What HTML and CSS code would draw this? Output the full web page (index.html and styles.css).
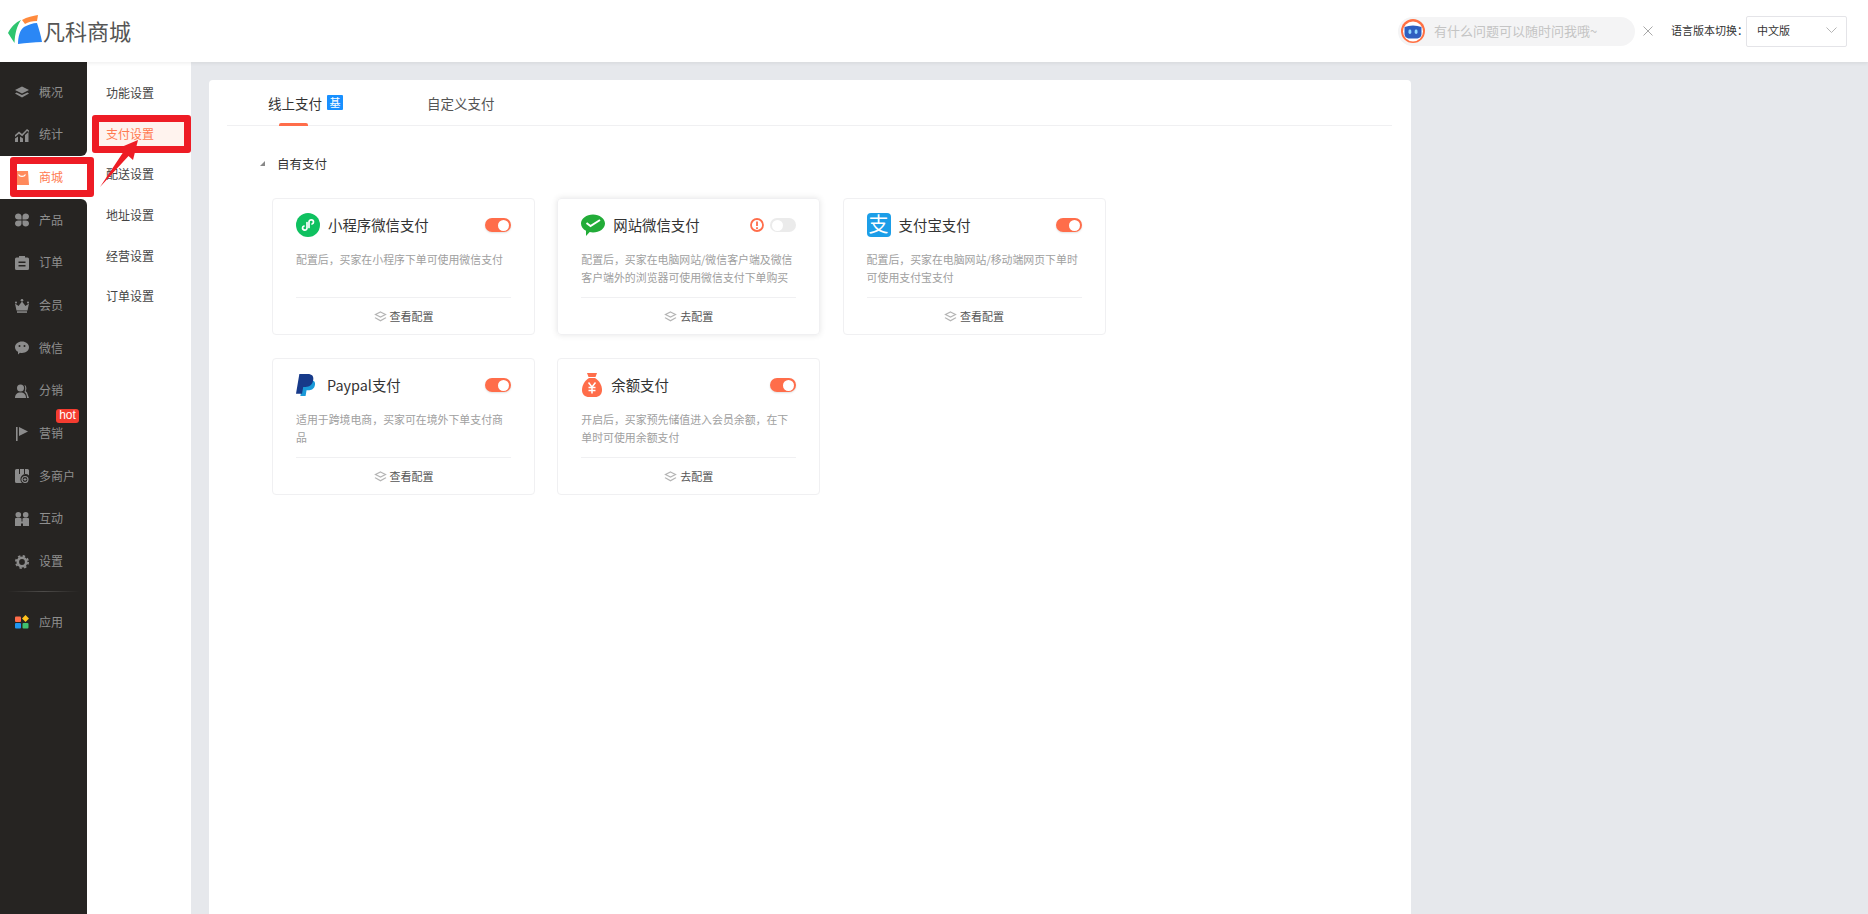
FILE: index.html
```html
<!DOCTYPE html>
<html lang="zh-CN">

<head>
    <meta charset="UTF-8">
    <meta name="viewport" content="width=device-width, initial-scale=1.0">
    <title>支付设置</title>
    <link rel="stylesheet" href="styles.css">
</head>

<body>

    <svg class="sprites" width="0" height="0">
        <symbol id="layers" viewBox="0 0 14 12">
            <path d="M7 .5 14 4 7 7.500 0 4Z" />
            <path d="M1.600 6.400 7 9.100l5.400-2.700L14 7.400 7 11.500 0 7.400Z" />
        </symbol>
        <symbol id="layers-line" viewBox="0 0 14 12">
            <path d="M7 1 12.500 3.800 7 6.600 1.500 3.800Z" fill="none" stroke="#b5b5b5" stroke-width="1.300" />
            <path d="M1.500 6.800 7 9.800 12.500 6.800 13.500 7.700 7 11.500 .5 7.700Z" fill="#b5b5b5" />
        </symbol>
    </svg>

    <header class="topbar">
        <div class="logo">
            <svg class="logo-mark" viewBox="0 0 36 32" width="36" height="32">
                <path d="M0 18C3 12 8 7 13 5 9 11 7 18 6.500 28 4 24 2 21 0 18Z" fill="#2ec56f" />
                <path d="M14 5C19 2 25 1 30 0L29 6C24 6 20 7 17 9Z" fill="#ff8a3d" />
                <path d="M10 29C10 21 12 15 16 12 20 10 25 8 29 8 31 14 33 21 34 27 26 27 18 28 10 29Z" fill="#2b87f5" />
            </svg>
            <span class="logo-text">凡科商城</span>
        </div>
        <div class="topbar-right">
            <div class="ask">
                <svg class="ask-avatar" viewBox="0 0 24 24" width="24" height="24">
                    <circle cx="12" cy="12" r="12" fill="#ff7043" />
                    <circle cx="12" cy="12.500" r="10" fill="#fff" />
                    <path d="M3.500 8 7.500 7C10.500 6.300 13.500 6.300 16.500 7L20.500 8V15C20.500 18 18 19.500 15.500 19.500H8.500C6 19.500 3.500 18 3.500 15Z" fill="#2f5fc0" />
                    <rect x="7.500" y="10.500" width="2.800" height="4.500" rx="1.400" fill="#8fd8ff" />
                    <rect x="13.700" y="10.500" width="2.800" height="4.500" rx="1.400" fill="#8fd8ff" />
                </svg>
                <span>有什么问题可以随时问我哦~</span>
            </div>
            <svg class="ask-close" viewBox="0 0 10 10" width="10" height="10">
                <path d="M.5.5l9 9M9.500.5l-9 9" stroke="#a8a8a8" stroke-width="1" fill="none" />
            </svg>
            <span class="lang-label">语言版本切换：</span>
            <div class="lang-select">
                <span>中文版</span>
                <svg viewBox="0 0 11 6" width="11" height="6">
                    <path d="M.5.5 5.500 5.500 10.500.5" stroke="#b5b5b5" fill="none" />
                </svg>
            </div>
        </div>
    </header>

    <div class="page">
        <aside class="sidenav">
            <div class="nav-group nav-top">
                <a class="nav-item">
                    <svg class="nav-icon" viewBox="0 0 14 12"><use href="#layers" /></svg>
                    <span>概况</span>
                </a>
                <a class="nav-item">
                    <svg class="nav-icon" viewBox="0 0 14 14">
                        <path d="M0 7 4 3.500 7 6 12 1l2 1.500V4L12 3 7.200 8.200 4 5.800 0 9Z" />
                        <path d="M0 10.500 3 8.500V14H0ZM5 8.500 8 10.500V14H5ZM10 7 13.500 4V14H10Z" />
                    </svg>
                    <span>统计</span>
                </a>
            </div>
            <a class="nav-item nav-active">
                <svg class="nav-icon" viewBox="0 0 14 14">
                    <path d="M1 0H13L14 14H0Z" />
                    <path d="M3.500 3.500C5 6 9 6 10.500 3.500" stroke="#fff" stroke-width="1.300" fill="none" />
                </svg>
                <span>商城</span>
            </a>
            <div class="nav-group nav-rest">
                <a class="nav-item">
                    <svg class="nav-icon" viewBox="0 0 14 14">
                        <path d="M0 3.300a3.300 3.300 0 0 1 6.500 0V6.500H3.300A3.300 3.300 0 0 1 0 3.300Z" />
                        <path d="M14 3.300a3.300 3.300 0 0 0-6.500 0V6.500h3.200A3.300 3.300 0 0 0 14 3.300Z" />
                        <path d="M0 10.700a3.300 3.300 0 0 0 6.500 0V7.500H3.300A3.300 3.300 0 0 0 0 10.700Z" />
                        <path d="M14 10.700a3.300 3.300 0 0 1-6.500 0V7.500h3.200A3.300 3.300 0 0 1 14 10.700Z" />
                    </svg>
                    <span>产品</span>
                </a>
                <a class="nav-item">
                    <svg class="nav-icon" viewBox="0 0 14 14">
                        <path fill-rule="evenodd" d="M4 0H10V1.500H12.500Q14 1.500 14 3V12.500Q14 14 12.500 14H1.500Q0 14 0 12.500V3Q0 1.500 1.500 1.500H4ZM3.500 5.500V7H10.500V5.500ZM3.500 9V10.500H10.500V9Z" />
                    </svg>
                    <span>订单</span>
                </a>
                <a class="nav-item">
                    <svg class="nav-icon" viewBox="0 0 14 14">
                        <path d="M0 4.500 3.500 7 7 2.500 10.500 7 14 4.500 12.500 11.500H1.500Z" />
                        <circle cx="7" cy="1.300" r="1.300" />
                        <circle cx="1" cy="3.500" r="1" />
                        <circle cx="13" cy="3.500" r="1" />
                        <rect x="2" y="12.300" width="10" height="1.500" />
                    </svg>
                    <span>会员</span>
                </a>
                <a class="nav-item">
                    <svg class="nav-icon" viewBox="0 0 14 14">
                        <path fill-rule="evenodd" d="M7 .5C11 .5 14 3 14 6.300S11 12 7 12C6.300 12 5.700 12 5 11.800L3 13.500V10.800C1 9.800 0 8.200 0 6.300 0 3 3 .5 7 .5ZM4.500 4a1 1 0 1 0 0 2 1 1 0 0 0 0-2ZM9.500 4a1 1 0 1 0 0 2 1 1 0 0 0 0-2Z" />
                    </svg>
                    <span>微信</span>
                </a>
                <a class="nav-item">
                    <svg class="nav-icon" viewBox="0 0 14 14">
                        <circle cx="5.500" cy="4" r="3.500" />
                        <path d="M0 14C0 10.500 2 8.500 5.500 8.500S11 10.500 11 14Z" />
                        <path d="M9.500 1C11.500 1.500 12 5.500 10.500 7L12 8.500 14 14H12C12 11 11 9 9.500 8 10.500 6 10.500 3 9.500 1Z" />
                    </svg>
                    <span>分销</span>
                </a>
                <a class="nav-item">
                    <svg class="nav-icon" viewBox="0 0 14 14">
                        <rect x="1" y="0" width="1.600" height="14" />
                        <path d="M4 0 13 4.500 4 9Z" />
                    </svg>
                    <span>营销</span>
                    <span class="hot">hot</span>
                </a>
                <a class="nav-item">
                    <svg class="nav-icon" viewBox="0 0 14 14">
                        <path d="M0 1.500Q0 0 1.500 0H12.500Q14 0 14 1.500V6.500A4.500 4.500 0 0 0 7 14H1.500Q0 14 0 12.500Z" />
                        <circle cx="10" cy="10.500" r="3" fill="none" stroke="#8c8c8c" stroke-width="1.200" />
                        <path d="M8.500 10.500h3M10 9v3" stroke="#8c8c8c" fill="none" />
                        <path d="M4.500 0V5M9.500 0V5" stroke="#262422" fill="none" />
                    </svg>
                    <span>多商户</span>
                </a>
                <a class="nav-item">
                    <svg class="nav-icon" viewBox="0 0 14 14">
                        <circle cx="3.300" cy="2.800" r="2.800" />
                        <circle cx="10.700" cy="2.800" r="2.800" />
                        <path d="M0 7Q0 6 1 6H5.500Q6.500 6 6.500 7V9.500H7.500V7Q7.500 6 8.500 6H13Q14 6 14 7V14H8V11.500H6V14H0Z" />
                    </svg>
                    <span>互动</span>
                </a>
                <a class="nav-item">
                    <svg class="nav-icon" viewBox="0 0 14 14">
                        <circle cx="7" cy="7" r="4.200" fill="none" stroke="#8c8c8c" stroke-width="2.600" />
                        <circle cx="7" cy="7" r="6.100" fill="none" stroke="#8c8c8c" stroke-width="1.800" stroke-dasharray="2.400 2.390" />
                    </svg>
                    <span>设置</span>
                </a>
                <div class="nav-line"></div>
                <a class="nav-item">
                    <svg class="nav-icon" viewBox="0 0 14 14">
                        <rect x="0" y="1.500" width="6" height="5.500" rx="1" fill="#ff6d4a" />
                        <rect x="0" y="8" width="6" height="5.500" rx="1" fill="#1e96f0" />
                        <rect x="7.500" y="8" width="6" height="5.500" rx="1" fill="#3fc06e" />
                        <path d="M10.500 0 14 3.500 10.500 7 7 3.500Z" fill="#ffc21c" />
                    </svg>
                    <span>应用</span>
                </a>
            </div>
        </aside>

        <nav class="subnav">
            <a class="sub-item">功能设置</a>
            <a class="sub-item sub-active">支付设置</a>
            <a class="sub-item">配送设置</a>
            <a class="sub-item">地址设置</a>
            <a class="sub-item">经营设置</a>
            <a class="sub-item">订单设置</a>
        </nav>

        <main class="content">
            <div class="panel">
                <div class="tabs">
                    <div class="tab tab-active">线上支付<span class="tab-badge">基</span></div>
                    <div class="tab">自定义支付</div>
                </div>

                <div class="section-title"><i class="caret"></i>自有支付</div>

                <div class="cards">
                    <div class="card">
                        <div class="card-head">
                            <svg class="pay-icon" viewBox="0 0 24 24" width="24" height="24">
                                <circle cx="12" cy="12" r="12" fill="#0fc160" />
                                <path d="M11 9.500V15C11 18 6.500 17.500 6.500 15 6.500 14 7.300 13.200 8 13M13 14.500V9C13 6 17.500 6.500 17.500 9 17.500 10 16.700 10.800 16 11" stroke="#fff" stroke-width="1.700" fill="none" stroke-linecap="round" />
                            </svg>
                            <span class="card-title">小程序微信支付</span>
                            <span class="switch switch-on"></span>
                        </div>
                        <p class="card-desc">配置后，买家在小程序下单可使用微信支付</p>
                        <div class="card-foot">
                            <svg class="foot-icon" viewBox="0 0 14 12"><use href="#layers-line" /></svg>查看配置
                        </div>
                    </div>

                    <div class="card card-hover">
                        <div class="card-head">
                            <svg class="pay-icon" viewBox="0 0 24 24" width="24" height="24">
                                <path d="M12 1.500C18.500 1.500 24 5.500 24 10.500S18.500 19.500 12 19.500C10.800 19.500 9.800 19.400 8.700 19.100L5 23V17.800C2 16.200 0 13.500 0 10.500 0 5.500 5.500 1.500 12 1.500Z" fill="#22ac38" />
                                <path d="M5.500 10 9.500 13 19 7" stroke="#fff" stroke-width="2" fill="none" />
                            </svg>
                            <span class="card-title">网站微信支付</span>
                            <svg class="warn" viewBox="0 0 14 14" width="14" height="14">
                                <circle cx="7" cy="7" r="6" fill="none" stroke="#ff6d4a" stroke-width="1.800" />
                                <path d="M7 3.500V8M7 9.300V11" stroke="#ff6d4a" stroke-width="1.800" fill="none" />
                            </svg>
                            <span class="switch"></span>
                        </div>
                        <p class="card-desc">配置后，买家在电脑网站/微信客户端及微信客户端外的浏览器可使用微信支付下单购买</p>
                        <div class="card-foot">
                            <svg class="foot-icon" viewBox="0 0 14 12"><use href="#layers-line" /></svg>去配置
                        </div>
                    </div>

                    <div class="card">
                        <div class="card-head">
                            <span class="alipay">支</span>
                            <span class="card-title">支付宝支付</span>
                            <span class="switch switch-on"></span>
                        </div>
                        <p class="card-desc">配置后，买家在电脑网站/移动端网页下单时可使用支付宝支付</p>
                        <div class="card-foot">
                            <svg class="foot-icon" viewBox="0 0 14 12"><use href="#layers-line" /></svg>查看配置
                        </div>
                    </div>

                    <div class="card">
                        <div class="card-head">
                            <svg class="pay-icon" viewBox="0 0 24 24" width="23" height="24">
                                <path d="M8 7H15C20 7 20.500 10 19.500 13 18.500 16.500 15.500 17.500 13 17.500H11L10 23.500H4.500Z" fill="#1a9ad9" />
                                <path d="M3.500 .5H12C17 .5 18.500 3 18 6.500 17.300 11.500 14 14 10 14H7.500L6.300 21H0Z" fill="#173a8a" />
                            </svg>
                            <span class="card-title">Paypal支付</span>
                            <span class="switch switch-on"></span>
                        </div>
                        <p class="card-desc">适用于跨境电商，买家可在境外下单支付商品</p>
                        <div class="card-foot">
                            <svg class="foot-icon" viewBox="0 0 14 12"><use href="#layers-line" /></svg>查看配置
                        </div>
                    </div>

                    <div class="card">
                        <div class="card-head">
                            <svg class="pay-icon" viewBox="0 0 22 24" width="22" height="24">
                                <path d="M6 0H16L14.500 4H7.500Z" fill="#ff6d4a" />
                                <path d="M8 5H14C18 7.500 21 12 21 17 21 21.500 18 24 14 24H8C4 24 1 21.500 1 17 1 12 4 7.500 8 5Z" fill="#ff6d4a" />
                                <path d="M7.500 9.500 11 14 14.500 9.500M11 14V20.500M7.500 14.500H14.500M7.500 17.500H14.500" stroke="#fff" stroke-width="1.500" fill="none" />
                            </svg>
                            <span class="card-title">余额支付</span>
                            <span class="switch switch-on"></span>
                        </div>
                        <p class="card-desc">开启后，买家预先储值进入会员余额，在下单时可使用余额支付</p>
                        <div class="card-foot">
                            <svg class="foot-icon" viewBox="0 0 14 12"><use href="#layers-line" /></svg>去配置
                        </div>
                    </div>
                </div>
            </div>
        </main>
    </div>

    <!-- red marks drawn over the screenshot -->
    <div class="mark mark-shop"></div>
    <div class="mark mark-pay"></div>
    <svg class="mark-arrow" viewBox="0 0 50 60" width="50" height="60">
        <path d="M1 48 25 12 20 9 39 1 34 21 29.500 17Z" fill="#ee1c25" />
    </svg>

</body>

</html>
```

FILE: styles.css
```css
* {
    box-sizing: border-box;
}

body {
    margin: 0;
    height: 914px;
    overflow: hidden;
    background-color: #e6e8ec;
    color: #333;
    font-family: "Noto Sans CJK SC", "Noto Sans", sans-serif;
    font-size: 12px;
    display: flex;
    flex-direction: column;
}

.sprites {
    position: absolute;
}

/* Top bar */
.topbar {
    height: 62px;
    flex: none;
    background-color: #fff;
    display: flex;
    align-items: center;
    justify-content: space-between;
    padding: 0 21px 0 8px;
    position: relative;
    z-index: 2;
    box-shadow: 0 1px 4px rgba(0, 0, 0, 0.08);
}

.logo {
    display: flex;
    align-items: center;
}

.logo-text {
    font-size: 22px;
    color: #555;
    margin-left: -1px;
    padding-bottom: 2px;
}

.topbar-right {
    display: flex;
    align-items: center;
}

.ask {
    width: 237px;
    height: 29px;
    border-radius: 15px;
    background-color: #f4f4f5;
    display: flex;
    align-items: center;
    gap: 9px;
    padding-left: 3px;
    color: #c4c4c4;
    font-size: 13px;
}

.ask span {
    padding-bottom: 2px;
}

.ask-close {
    margin: 0 18px 0 8px;
}

.lang-label {
    width: 75px;
    padding-bottom: 2px;
    font-size: 11px;
    color: #333;
    white-space: nowrap;
}

.lang-select {
    width: 101px;
    height: 31px;
    border: 1px solid #e4e4e8;
    border-radius: 2px;
    display: flex;
    align-items: center;
    justify-content: space-between;
    padding: 0 9px 2px 10px;
    font-size: 11px;
    color: #333;
}

/* Page */
.page {
    flex: 1;
    display: flex;
    min-height: 0;
}

.sidenav {
    width: 87px;
    flex: none;
    background-color: #fff;
    display: flex;
    flex-direction: column;
}

.nav-group {
    background-color: #262422;
}

.nav-top {
    padding-top: 9px;
    border-bottom-right-radius: 6px;
}

.nav-rest {
    flex: 1;
    border-top-right-radius: 6px;
}

.nav-item {
    height: 42.67px;
    display: flex;
    align-items: center;
    gap: 10px;
    padding-left: 15px;
    color: #8f8f8f;
    font-size: 12px;
    position: relative;
}

.nav-item span {
    margin-top: -2px;
}

.nav-icon {
    width: 14px;
    height: 14px;
    flex: none;
    fill: #8c8c8c;
}

.nav-active {
    color: #ff7a50;
}

.nav-active .nav-icon {
    fill: #ff8a5c;
}

.nav-item .hot {
    position: absolute;
    top: -3px;
    left: 56px;
    margin-top: 0;
    width: 23px;
    height: 14px;
    line-height: 13px;
    text-align: center;
    border-radius: 3px;
    background-color: #f43c30;
    color: #fff;
    font-size: 12px;
    font-family: "Liberation Sans", sans-serif;
}

.nav-line {
    height: 1px;
    margin: 8px 8px 9px;
    background: linear-gradient(to right, #262422, #4d4b49 50%, #262422);
}

.subnav {
    width: 104px;
    flex: none;
    background-color: #fff;
    padding-top: 11px;
    display: flex;
    flex-direction: column;
}

.sub-item {
    display: flex;
    align-items: center;
    height: 30px;
    margin: 5.3px 6px 5.3px 8px;
    padding: 0 0 1px 11px;
    color: #444;
    font-size: 12px;
}

.sub-active {
    background-color: #fff3ee;
    color: #ff7a50;
}

/* Main panel */
.content {
    flex: 1;
    padding: 18px 457px 0 18px;
    min-width: 0;
}

.panel {
    height: 100%;
    background-color: #fff;
    border-radius: 4px 4px 0 0;
    padding: 0 19px 0 18px;
}

.tabs {
    height: 46px;
    display: flex;
    gap: 84px;
    padding-left: 41px;
    border-bottom: 1px solid #f0f0f2;
}

.tab {
    display: flex;
    align-items: center;
    height: 45px;
    font-size: 13.500px;
    color: #555;
    position: relative;
}

.tab-active {
    color: #333;
}

.tab-active::after {
    content: "";
    position: absolute;
    left: 11px;
    bottom: -1px;
    width: 29px;
    height: 3px;
    border-radius: 2px 2px 0 0;
    background-color: #ff6d4a;
}

.tab-badge {
    width: 16px;
    height: 15px;
    margin-left: 5px;
    border-radius: 1px;
    background-color: #1890ff;
    color: #fff;
    font-size: 11px;
    line-height: 15px;
    text-align: center;
}

.section-title {
    display: flex;
    align-items: center;
    height: 20px;
    margin: 27px 0 25px 33px;
    font-size: 12.500px;
    color: #333;
}

.caret {
    width: 0;
    height: 0;
    margin-right: 12px;
    border-left: 5px solid transparent;
    border-bottom: 5px solid #888;
}

.cards {
    display: grid;
    grid-template-columns: repeat(3, 263px);
    grid-auto-rows: 137px;
    column-gap: 22.300px;
    row-gap: 23px;
    margin-left: 45px;
}

.card {
    border: 1px solid #f0f0f2;
    border-radius: 4px;
    padding: 14px 23px 0 23px;
    display: flex;
    flex-direction: column;
}

.card-hover {
    box-shadow: 0 0 6px rgba(0, 0, 0, 0.1);
}

.card-head {
    height: 24px;
    display: flex;
    align-items: center;
    gap: 8px;
    flex: none;
}

.pay-icon {
    flex: none;
}

.alipay {
    width: 24px;
    height: 24px;
    flex: none;
    border-radius: 4px;
    background-color: #1c9ee8;
    color: #fff;
    font-size: 20px;
    line-height: 22px;
    text-align: center;
}

.card-title {
    flex: 1;
    padding-bottom: 2px;
    font-size: 14.400px;
    color: #333;
}

.warn {
    flex: none;
    margin-right: -2px;
}

.switch {
    width: 26px;
    height: 14px;
    flex: none;
    border-radius: 7px;
    background-color: #ebebeb;
    position: relative;
}

.switch::after {
    content: "";
    position: absolute;
    top: 1.500px;
    left: 2px;
    width: 11px;
    height: 11px;
    border-radius: 50%;
    background-color: #fff;
}

.switch-on {
    background-color: #ff6d4a;
    box-shadow: 0 1px 2px rgba(0, 0, 0, 0.12);
}

.switch-on::after {
    left: 13px;
}

.card-desc {
    height: 47px;
    margin: 13px 0 0;
    font-size: 10.900px;
    line-height: 18px;
    color: #a0a0a0;
}

.card-foot {
    flex: 1;
    border-top: 1px solid #f0f0f2;
    display: flex;
    align-items: center;
    justify-content: center;
    gap: 3px;
    font-size: 11px;
    color: #555;
}

.foot-icon {
    width: 13px;
    height: 11px;
}

/* Red marks */
.mark {
    position: absolute;
    z-index: 5;
    border: 7px solid #ee1c25;
    border-radius: 3px;
}

.mark-shop {
    left: 10px;
    top: 157px;
    width: 84px;
    height: 40px;
}

.mark-pay {
    left: 92px;
    top: 115px;
    width: 99px;
    height: 38px;
}

.mark-arrow {
    position: absolute;
    z-index: 6;
    left: 99px;
    top: 139px;
}
```
